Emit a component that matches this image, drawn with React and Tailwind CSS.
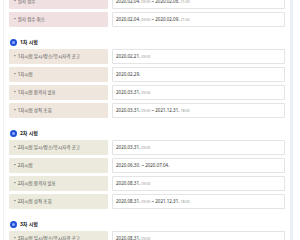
import React from "react";

const groups = [
  {
    title: null,
    bg: "bg-[#f0e0e1]",
    rows: [
      ["원서 접수", [["2020.02.04.", "09:00"], ["2020.02.06.", "21:00"]]],
      ["원서 접수 취소", [["2020.02.04.", "09:00"], ["2020.02.09.", "21:00"]]],
    ],
  },
  {
    title: "1차 시험",
    bg: "bg-[#efe6de]",
    rows: [
      ["1차시험 일시/장소/응시자격 공고", [["2020.02.21.", "09:00"]]],
      ["1차시험", [["2020.02.29.", ""]]],
      ["1차시험 합격자 발표", [["2020.03.31.", "09:00"]]],
      ["1차시험 성적 조회", [["2020.03.31.", "09:00"], ["2021.12.31.", "18:00"]]],
    ],
  },
  {
    title: "2차 시험",
    bg: "bg-[#ebeadc]",
    rows: [
      ["2차시험 일시/장소/응시자격 공고", [["2020.03.31.", "09:00"]]],
      ["2차시험", [["2020.06.30.", ""], ["2020.07.04.", ""]]],
      ["2차시험 합격자 발표", [["2020.08.31.", "09:00"]]],
      ["2차시험 성적 조회", [["2020.08.31.", "09:00"], ["2021.12.31.", "18:00"]]],
    ],
  },
  {
    title: "3차 시험",
    bg: "bg-[#ebeadc]",
    rows: [
      ["3차시험 일시/장소/응시자격 공고", [["2020.08.31.", "09:00"]]],
      ["3차시험", [["2020.09.19.", ""]]],
    ],
  },
];

function Value({ parts }) {
  return (
    <span className="whitespace-nowrap">
      {parts.map(([d, t], i) => (
        <React.Fragment key={i}>
          {i > 0 && <span className="text-[#333]"> ~ </span>}
          <span className="text-[#333]">{d}</span>
          {t && <span className="text-[#999] text-[3.6px]"> {t}</span>}
        </React.Fragment>
      ))}
    </span>
  );
}

export default function App() {
  return (
    <div className="w-[300px] h-[240px] overflow-hidden bg-white font-['Noto_Sans','Noto_Sans_CJK_KR',sans-serif]">
      <div className="ml-[3px] mr-[7px] -mt-[6px] h-[260px] border-l border-l-[#eef0f3] border-r-[3px] border-r-[#e9eef7] pl-[5px] pr-[5px]">
        {groups.map((g, gi) => (
          <div key={gi}>
            {g.title && (
              <div className="mt-[11px] mb-[3px] h-[8px] flex items-center gap-[3px] pl-[1px]">
                <span className="w-[7px] h-[7px] rounded-full bg-[#1f4fd8] flex items-center justify-center">
                  <span className="w-[3px] h-[3px] rounded-full bg-[#8fb0ff]" />
                </span>
                <span className="text-[5px] font-bold text-[#222] leading-none">{g.title}</span>
              </div>
            )}
            <div className="flex flex-col gap-[3px]">
              {g.rows.map(([label, parts], ri) => (
                <div key={ri} className="flex gap-[4px] h-[15px]">
                  <div className={`w-[99px] ${g.bg} rounded-[1px] flex items-center pl-[5px] text-[4.5px] text-[#555] leading-none whitespace-nowrap`}>
                    <span className="mr-[2px]">•</span>
                    {label}
                  </div>
                  <div className="flex-1 border border-[#e4e4e4] rounded-[1px] bg-white flex items-center pl-[3px] text-[4.5px] leading-none shadow-[0_0_1px_rgba(0,0,0,0.05)]">
                    <Value parts={parts} />
                  </div>
                </div>
              ))}
            </div>
          </div>
        ))}
      </div>
    </div>
  );
}
